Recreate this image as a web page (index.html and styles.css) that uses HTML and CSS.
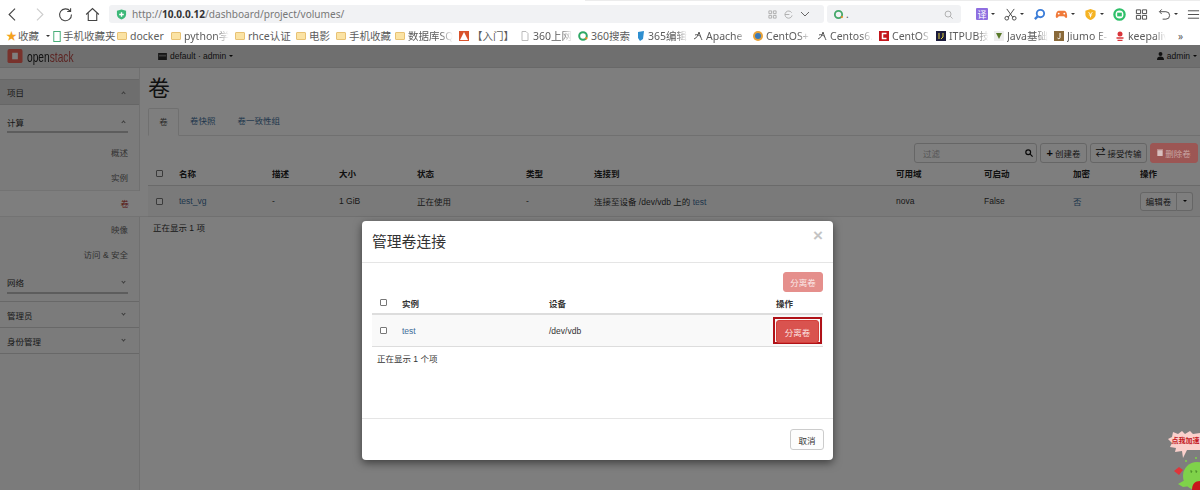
FILE: index.html
```html
<!DOCTYPE html>
<html lang="zh-CN">
<head>
<meta charset="utf-8">
<title>卷 - OpenStack Dashboard</title>
<link rel="stylesheet" href="styles.css">
</head>
<body>
<header class="browser">
  <div class="toolbar">
    <svg class="tb-nav" viewBox="0 0 20 20"><path d="M13 3 6 10l7 7" stroke="#444"/></svg>
    <svg class="tb-nav" viewBox="0 0 20 20"><path d="M7 3l7 7-7 7" stroke="#ccc"/></svg>
    <svg class="tb-nav" viewBox="0 0 20 20"><path d="M15.500 6A7 7 0 1 0 17 10M16 2.500V6.500H12" stroke="#444"/></svg>
    <svg class="tb-nav" viewBox="0 0 20 20"><path d="M2.500 10 10 3l7.500 7M5 8.500V17h10V8.500" stroke="#444"/></svg>
    <div class="address">
      <svg class="shield" viewBox="0 0 12 12"><path d="M6 .5 11 2v4c0 3-2.500 4.800-5 5.500C3.500 10.800 1 9 1 6V2z" fill="#3cb878"/><path d="M6 3.500v5M3.500 6h5" stroke="#fff" stroke-width="1.500"/></svg>
      <span class="url">http://<b>10.0.0.12</b>/dashboard/project/volumes/</span>
      <span class="addr-tools">
        <svg class="mini" viewBox="0 0 10 10"><path d="M1 1h3v3H1zM6 1h3v3H6zM1 6h3v3H1zM6 6h3v3H6z" stroke="#aaa" fill="none"/></svg>
        <svg class="mini" viewBox="0 0 10 10"><path d="M8.500 3A4 4 0 1 0 9 6M1 5h5" stroke="#aaa" fill="none"/></svg>
        <svg class="chev" viewBox="0 0 10 10"><path d="M1 3l4 4 4-4" stroke="#666" fill="none"/></svg>
      </span>
    </div>
    <div class="search">
      <svg class="q" viewBox="0 0 12 12"><circle cx="6" cy="6" r="4" stroke="#45a86a" stroke-width="2" fill="none"/><path d="M9 9.500 10.500 8" stroke="#f08a24" stroke-width="2"/></svg>
      <span class="dots">.</span>
      <svg class="mag" viewBox="0 0 10 10"><circle cx="4.500" cy="4.500" r="3.300" stroke="#aaa" fill="none"/><path d="m7 7 2.500 2.500" stroke="#aaa"/></svg>
    </div>
    <div class="tools">
      <span class="tool t1"><i class="yi">译</i></span><i class="drop"></i>
      <svg class="tool t2" viewBox="0 0 14 14"><path d="M3 1l6.500 9M11 1 4.500 10" stroke="#444" fill="none"/><circle cx="3" cy="11" r="2" stroke="#444" fill="none"/><circle cx="11" cy="11" r="2" stroke="#444" fill="none"/></svg><i class="drop"></i>
      <svg class="tool t3" viewBox="0 0 14 14"><circle cx="8" cy="6" r="4" stroke="#3b7dd8" stroke-width="2" fill="none"/><path d="M5 9 2 12" stroke="#3b7dd8" stroke-width="2.500"/></svg>
      <svg class="tool t4" viewBox="0 0 14 14"><path d="M4 3h6c2.500 0 3.500 5 3 7-.5 1.500-2 1-3-1H4c-1 2-2.500 2.500-3 1-.5-2 .5-7 3-7z" fill="#f07a3a"/><circle cx="10" cy="6" r="1" fill="#fff"/><circle cx="4" cy="6" r="1" fill="#fff"/></svg><i class="drop"></i>
      <svg class="tool t5" viewBox="0 0 14 14"><path d="M7 1l5.500 2v4c0 3-3 5-5.500 6C4.500 12 1.500 10 1.500 7V3z" fill="#f5b324"/><path d="M5 4.500 7 7l2-2.500M7 7v3M5.200 7.500h3.600" stroke="#fff" fill="none"/></svg><i class="drop"></i>
      <svg class="tool t6" viewBox="0 0 14 14"><circle cx="7" cy="7" r="5.500" stroke="#2fc06a" stroke-width="2.500" fill="none"/><path d="M4.500 5h5v4h-5z" fill="#2fc06a"/></svg>
      <svg class="tool t7" viewBox="0 0 14 14"><path d="M1.500 2h4.500v4H1.500zM8 2h4.500v4H8zM1.500 8H6v4H1.500zM8 8h4.500v4H8z" stroke="#444" fill="none"/></svg>
      <svg class="tool t8" viewBox="0 0 14 14"><path d="M2 4h6.500a4 4 0 0 1 0 8H5M4 1.500 1.500 4 4 6.500" stroke="#444" fill="none"/></svg><i class="drop"></i>
      <svg class="tool t9" viewBox="0 0 14 14"><path d="M1 3h12M1 7h12M1 11h12" stroke="#444"/></svg>
    </div>
  </div>
  <nav class="bookmarks">
    <span class="star">★</span><span class="bm w28">收藏</span><i class="drop d-bm"></i>
    <svg class="bi" viewBox="0 0 8 12"><rect x=".5" y=".5" width="7" height="11" fill="none" stroke="#3aa76d"/></svg><span class="bm w54">手机收藏夹</span>
    <i class="folder"></i><span class="bm w41">docker</span>
    <i class="folder"></i><span class="bm w51 fade">python学</span>
    <i class="folder"></i><span class="bm w48">rhce认证</span>
    <i class="folder"></i><span class="bm w27">电影</span>
    <i class="folder"></i><span class="bm w46">手机收藏</span>
    <i class="folder"></i><span class="bm w51 fade">数据库SQ</span>
    <svg class="fav" viewBox="0 0 10 10"><path d="M0 0h10v10H0z" fill="#d9532c"/><path d="M5 1 9 9H1z" fill="#fff"/></svg><span class="bm w48">【入门】</span>
    <svg class="fav" viewBox="0 0 10 10"><path d="M2 .5h4l2 2v7H2z" fill="#fff" stroke="#bbb"/></svg><span class="bm w45 fade">360上网</span>
    <svg class="fav" viewBox="0 0 10 10"><circle cx="5" cy="5" r="3.800" stroke="#2fa866" stroke-width="2" fill="none"/><path d="M7.500 8 9 6.500" stroke="#f08a24" stroke-width="2"/></svg><span class="bm w46">360搜索</span>
    <svg class="fav fav-n" viewBox="0 0 8 10"><path d="M1 1l6-1-1 8-3 2-2-3z" fill="#2f8fd0"/></svg><span class="bm w45 fade">365编辑</span>
    <svg class="fav" viewBox="0 0 10 10"><path d="M1 8c3-1 4-4 5-7 1 3 2 6 3 8M2 4c2-1 4 0 6 2" stroke="#555" fill="none"/></svg><span class="bm w47 fade">Apache</span>
    <svg class="fav" viewBox="0 0 10 10"><circle cx="5" cy="5" r="5" fill="#e8a23a"/><circle cx="5" cy="5" r="3" fill="#3a7ab8"/></svg><span class="bm w51 fade">CentOS+</span>
    <svg class="fav" viewBox="0 0 10 10"><path d="M1 8c3-1 4-4 5-7 1 3 2 6 3 8M2 4c2-1 4 0 6 2" stroke="#555" fill="none"/></svg><span class="bm w49 fade">Centos6.</span>
    <svg class="fav" viewBox="0 0 10 10"><path d="M0 0h10v10H0z" fill="#c3161c"/><path d="M7.500 2.500h-4v5h4" stroke="#fff" stroke-width="1.500" fill="none"/></svg><span class="bm w44 fade">CentOS</span>
    <svg class="fav" viewBox="0 0 10 10"><path d="M0 0h10v10H0z" fill="#1c1c3c"/><path d="M3 2v6M7 2v4L5 8" stroke="#e0d040" fill="none"/></svg><span class="bm w45 fade">ITPUB技</span>
    <svg class="fav" viewBox="0 0 10 10"><path d="M0 0h10v10H0z" fill="#eee"/><path d="M2 2l3 6 3-6z" fill="#5a7a2a"/></svg><span class="bm w47 fade">Java基础</span>
    <svg class="fav" viewBox="0 0 10 10"><path d="M0 0h10v10H0z" fill="#8a6a3a"/><path d="M6 2v4.500c0 1.500-2 1.500-2.500.5" stroke="#fff" fill="none"/></svg><span class="bm w48 fade">Jiumo E-</span>
    <svg class="fav" viewBox="0 0 10 10"><circle cx="5" cy="3" r="2.500" fill="#d8343a"/><path d="M1.500 7h7M2.500 9.500h5" stroke="#d8343a" stroke-width="1.500"/></svg><span class="bm w43 fade">keepaliv</span>
    <span class="more">»</span>
  </nav>
</header>

<div class="app">
  <div class="topbar">
    <div class="brand">
      <svg class="logo" viewBox="0 0 16 16"><rect x="0" y="0" width="16" height="15" rx="2" fill="#f06458"/><rect x="5" y="4" width="6" height="7" fill="#fff"/></svg>
      <span class="brand-name">open<span class="brand-red">stack</span></span>
    </div>
    <div class="ctx">
      <svg class="ctx-ico" viewBox="0 0 10 8"><path d="M0 0h10v8H0z" fill="#2a2a2a"/><path d="M1 2h8v2H1z" fill="#777"/></svg>
      <span>default · admin</span><i class="caret"></i>
    </div>
    <div class="user">
      <svg class="user-ico" viewBox="0 0 8 9"><circle cx="4" cy="2.200" r="2.200" fill="#222"/><path d="M0 9c0-3 1.500-4 4-4s4 1 4 4z" fill="#222"/></svg>
      <span>admin</span><i class="caret"></i>
    </div>
  </div>
  <div class="body">
    <aside class="sidebar">
      <div class="s-head s-open">项目<i class="chev-up"></i></div>
      <div class="s-group">计算<i class="chev-up"></i></div>
      <a class="s-link s-first">概述</a>
      <a class="s-link s-last">实例</a>
      <a class="s-link s-active">卷</a>
      <a class="s-link">映像</a>
      <a class="s-link">访问 &amp; 安全</a>
      <div class="s-group s-net">网络<i class="chev-down"></i></div>
      <div class="s-head">管理员<i class="chev-down"></i></div>
      <div class="s-head">身份管理<i class="chev-down"></i></div>
    </aside>
    <main class="content">
      <h1 class="title">卷</h1>
      <ul class="tabs">
        <li class="tab tab-on">卷</li>
        <li class="tab">卷快照</li>
        <li class="tab">卷一致性组</li>
      </ul>
      <div class="actions">
        <div class="filter"><span>过滤</span>
          <svg class="f-ico" viewBox="0 0 10 10"><circle cx="4" cy="4" r="3" stroke="#111" stroke-width="1.500" fill="none"/><path d="m6.500 6.500 3 3" stroke="#111" stroke-width="1.500"/></svg>
        </div>
        <button class="btn b-create"><b class="plus">+</b><span>创建卷</span></button>
        <button class="btn b-accept"><b class="swap">⇄</b><span>接受传输</span></button>
        <button class="btn b-del"><svg class="trash" viewBox="0 0 8 9"><path d="M1 2h6v7H1zM0 1h8" fill="#d8c0c0" stroke="#d8c0c0"/></svg><span>删除卷</span></button>
      </div>
      <div class="vol-table">
        <div class="vrow vhead">
          <span class="cb-cell"><i class="cb"></i></span><span>名称</span><span>描述</span><span>大小</span><span>状态</span><span>类型</span><span>连接到</span><span>可用域</span><span>可启动</span><span>加密</span><span>操作</span>
        </div>
        <div class="vrow vbody">
          <span class="cb-cell"><i class="cb"></i></span><a class="lnk">test_vg</a><span>-</span><span>1 GiB</span><span>正在使用</span><span>-</span><span>连接至设备 /dev/vdb 上的 <a class="lnk">test</a></span><span>nova</span><span>False</span><a class="lnk">否</a>
          <span class="split"><button class="btn b-edit">编辑卷</button><button class="btn b-car"><i class="caret"></i></button></span>
        </div>
      </div>
      <p class="count">正在显示 1 项</p>
    </main>
  </div>

  <div class="backdrop"></div>

  <section class="modal">
    <div class="m-head"><h2>管理卷连接</h2><span class="close">×</span></div>
    <div class="m-body">
      <div class="m-actions"><button class="btn b-detach-off">分离卷</button></div>
      <div class="mrow mhead"><span class="cb-cell"><i class="cb"></i></span><span>实例</span><span>设备</span><span>操作</span></div>
      <div class="mrow mbody"><span class="cb-cell"><i class="cb"></i></span><a class="lnk">test</a><span>/dev/vdb</span><span class="hl"><button class="btn b-detach">分离卷</button></span></div>
      <p class="m-count">正在显示 1 个项</p>
    </div>
    <div class="m-foot"><button class="btn b-cancel">取消</button></div>
  </section>

  <div class="mascot">
    <svg viewBox="0 0 34 60" width="34" height="60">
      <path d="M2 9 6 7 7 2l5 2 4-3 3 3 5-3 3 3 7-1v17H21l-4 8-1-7-7 1 1-4-6-1 2-4z" fill="#fbd0cc"/>
      <text x="5.500" y="13" class="m-text">点我加速</text>
      <path d="M8 41l5-4 4 3-4 5z" fill="#e0343a"/>
      <circle cx="31" cy="46" r="14" fill="#7fd24a"/>
      <path d="M19 50 12 54l5 3 7-1z" fill="#7fd24a"/>
      <path d="M26 60c0-6 3-9 8-9v9z" fill="#c8161c"/>
      <path d="M24 41h2l-1 2M29 41h2l-1 2" stroke="#3c7a20" fill="none" stroke-width=".7"/>
      <circle cx="20" cy="31" r="1" fill="#7fd24a"/><circle cx="30" cy="28" r="1" fill="#7fd24a"/>
    </svg>
  </div>
</div>
</body>
</html>
```
FILE: styles.css
```css
* { box-sizing: border-box; }
html, body { margin: 0; padding: 0; height: 490px; overflow: hidden; }
body { width: 1200px; font-family: "Liberation Sans", "Noto Sans CJK SC", sans-serif; font-size: 8.5px; color: #333; background: #fff; }
i { font-style: normal; display: inline-block; }

/* browser chrome */
.browser { height: 45px; background: #fff; font-family: "Noto Sans", "Noto Sans CJK SC", sans-serif; }
.toolbar { height: 27px; display: flex; align-items: center; padding: 1px 0 0 4px; background: linear-gradient(#ececec, #ececec) 585px 0 / 615px 1px no-repeat; }
.tb-nav { width: 17px; height: 17px; margin-right: 9.500px; fill: none; stroke-width: 1.300; flex: none; }
.address { width: 715px; height: 18px; margin-left: -1px; background: #f1f2f4; border-radius: 3px; display: flex; align-items: center; padding: 0 0 0 7px; flex: none; }
.shield { width: 11px; height: 11px; margin-right: 5px; }
.url { font-size: 10.100px; color: #777; white-space: nowrap; flex: 1; }
.url b { color: #333; font-weight: 700; }
.addr-tools { display: flex; gap: 7px; align-items: center; padding-right: 14px; }
.mini { width: 9px; height: 9px; }
.chev { width: 10px; height: 10px; }
.search { width: 134px; height: 18px; margin-left: 3px; background: #f1f2f4; border-radius: 3px; display: flex; align-items: center; padding: 0 8px 0 6px; flex: none; }
.q { width: 11px; height: 11px; }
.dots { flex: 1; font-size: 10px; line-height: 10px; color: #555; padding-left: 2px; }
.mag { width: 9px; height: 9px; }
.tools { display: flex; align-items: center; margin-left: 15px; flex: none; }
.tool { width: 13px; height: 13px; flex: none; }
.t1 { background: #8f6ee0; display: flex; align-items: center; justify-content: center; border-radius: 1px; width: 12px; height: 12px; }
.yi { color: #fff; font-size: 9px; line-height: 9px; }
.drop { width: 0; height: 0; border: 2px solid transparent; border-top: 2.500px solid #333; border-bottom: 0; margin: 0 9px 0 3px; flex: none; }
.t3, .t6 { margin-right: 9px; }
.t7 { margin-right: 10px; }
.bookmarks { height: 18px; display: flex; align-items: center; padding-left: 6px; font-size: 10.500px; color: #5c5c5c; white-space: nowrap; overflow: hidden; }
.star { color: #f4a21e; font-size: 11px; width: 12px; line-height: 12px; flex: none; }
.bm { display: block; overflow: hidden; flex: none; line-height: 18px; }
.fade { mask-image: linear-gradient(to right, #000 62%, transparent 88%); -webkit-mask-image: linear-gradient(to right, #000 62%, transparent 88%); }
.w27 { width: 27px; } .w28 { width: 28px; } .w41 { width: 41px; } .w43 { width: 43px; } .w44 { width: 44px; } .w45 { width: 45px; }
.w46 { width: 46px; } .w47 { width: 47px; } .w48 { width: 48px; } .w49 { width: 49px; } .w51 { width: 51px; } .w54 { width: 54px; }
.d-bm { margin: 0 3px 0 0; }
.bi { width: 8px; height: 11px; margin-right: 2px; flex: none; }
.folder { width: 10px; height: 8px; background: #fbe3a4; border: 1px solid #e8c274; border-radius: 1px; margin-right: 3px; flex: none; }
.fav { width: 10px; height: 10px; margin-right: 3px; flex: none; }
.fav-n { width: 8px; }
.more { margin-left: 7px; font-size: 10px; }

/* app */
.app { position: relative; height: 445px; background: #fdfdfd; overflow: hidden; }
.topbar { height: 23px; background: #dedede; display: flex; align-items: center; border-bottom: 1px solid #d0d0d0; }
.brand { width: 158px; display: flex; align-items: center; padding-left: 7px; }
.logo { width: 16px; height: 15px; margin-right: 4px; }
.brand-name { font-size: 15px; font-family: "Liberation Sans Narrow", "Liberation Sans", sans-serif; color: #222; transform: scaleX(.68); transform-origin: left; }
.brand-red { color: #b84a46; }
.ctx { display: flex; align-items: center; gap: 3px; color: #222; font-size: 8.500px; }
.ctx-ico { width: 9px; height: 7px; }
.user { margin-left: auto; display: flex; align-items: center; gap: 3px; padding-right: 3px; color: #222; }
.user-ico { width: 7px; height: 8px; }
.caret { width: 0; height: 0; border: 2.500px solid transparent; border-top: 2.500px solid #111; border-bottom: 0; }

.body { display: flex; height: 422px; }
.sidebar { width: 140px; flex: none; background: #f6f6f6; border-right: 1px solid #e0e0e0; padding-top: 11px; color: #333; position: relative; z-index: 1; }
.s-head { height: 26px; padding: 0 14px 0 7px; display: flex; align-items: center; justify-content: space-between; border-top: 1px solid #d0d0d0; font-size: 8.500px; }
.s-open { background: #dcdcdc; border-bottom: 1px solid #ccc; }
.s-head:last-child { border-bottom: 1px solid #d0d0d0; height: 27px; }
.s-group { height: 28px; margin: 0 11px 0 7px; padding: 7px 3px 0 0; display: flex; align-items: center; justify-content: space-between; border-bottom: 2px solid #bbb; font-size: 8.500px; }
.s-net { height: 26px; padding-top: 4px; margin-bottom: 7px; }
.s-link { display: block; height: 25px; line-height: 25px; text-align: right; padding-right: 11px; color: #666; font-size: 8.500px; }
.s-first { margin-top: 8px; }
.s-last { border-bottom: 1px solid #e6e6e6; }
.s-active { background: #fdfdfd; color: #b3322c; height: 26px; line-height: 26px; margin-bottom: 1px; width: 148px; border-bottom: 1px solid #e6e6e6; padding-right: 19px; }
.chev-up, .chev-down { width: 3px; height: 3px; border-left: 1px solid #777; border-top: 1px solid #777; flex: none; }
.chev-up { transform: rotate(45deg); margin-top: 2px; }
.chev-down { transform: rotate(225deg); margin-top: -2px; }

.content { flex: 1; min-width: 0; padding: 6px 0 0 8px; }
.title { margin: 0; font-size: 22px; font-weight: 400; line-height: 29px; color: #222; height: 34px; }
.tabs { margin: 0; padding: 0; list-style: none; display: flex; height: 28px; border-bottom: 1px solid #e0e0e0; }
.tab { height: 28px; padding: 0 11px; line-height: 27px; color: #3f6e99; font-size: 8.500px; }
.tab-on { width: 31px; padding: 0; text-align: center; color: #555; background: #fdfdfd; border: 1px solid #e0e0e0; border-bottom-color: #fdfdfd; border-radius: 2px 2px 0 0; }
.actions { display: flex; justify-content: flex-end; gap: 3px; margin-top: 6px; padding-right: 2px; height: 21px; align-items: center; }
.filter { width: 123px; height: 20px; border: 1px solid #ccc; border-radius: 3px; display: flex; align-items: center; justify-content: space-between; padding: 0 3px 0 8px; color: #aaa; background: #fdfdfd; }
.f-ico { width: 8px; height: 8px; }
.btn { font: inherit; font-size: 8.500px; border: 1px solid #ccc; border-radius: 3px; background: #fdfdfd; color: #333; padding: 0; margin: 0; height: 20px; display: inline-flex; align-items: center; justify-content: center; gap: 2px; }
.b-create { width: 47px; }
.b-accept { width: 57px; }
.b-del { width: 48px; background: #9c5654; border-color: #9c5654; color: #c8a4a2; position: relative; z-index: 6; }
.plus { font-size: 11px; line-height: 10px; color: #111; }
.swap { font-size: 10px; line-height: 10px; color: #111; font-weight: 400; }
.trash { width: 6px; height: 7px; }
.vol-table { margin-top: -2px; }
.vrow { display: grid; grid-template-columns: 31px 93px 67px 78px 109px 68px 302px 88px 89px 67px 60px; align-items: center; width: 1052px; }
.vhead { height: 25px; font-weight: 700; color: #222; border-bottom: 1px solid #d4d4d4; }
.vbody { height: 31px; background: #f5f5f5; border-bottom: 1px solid #e0e0e0; }
.cb-cell { display: flex; padding-left: 8px; }
.cb { width: 7px; height: 7px; border: 1px solid #777; border-radius: 1px; background: #fff; }
.lnk { color: #3f6e99; }
.split { display: flex; }
.b-edit { width: 37px; height: 19px; border-radius: 3px 0 0 3px; }
.b-car { width: 16px; height: 19px; border-left: 0; border-radius: 0 3px 3px 0; }
.count { margin: 5px 0 0 5px; line-height: 12px; color: #333; }

.backdrop { position: absolute; inset: 0; background: rgba(0, 0, 0, .5); z-index: 5; }
.modal { position: absolute; left: 362px; top: 176px; width: 471px; height: 239px; background: #fff; border-radius: 4px; box-shadow: 0 3px 9px rgba(0, 0, 0, .5); z-index: 6; display: flex; flex-direction: column; }
.m-head { height: 42px; border-bottom: 1px solid #e5e5e5; display: flex; align-items: center; justify-content: space-between; padding: 0 10px; flex: none; }
.m-head h2 { margin: 0; font-size: 14.800px; font-weight: 400; color: #333; line-height: 20px; }
.close { font-size: 17px; line-height: 17px; font-weight: 700; color: #c4c4c4; margin: -12px 0 0; }
.m-body { flex: 1; padding: 9px 10px 0; }
.m-actions { display: flex; justify-content: flex-end; height: 20px; }
.b-detach-off { width: 40px; height: 20px; background: #e58f8c; border-color: #e58f8c; color: #fbe9e8; }
.mrow { display: grid; grid-template-columns: 30px 147px 227px 47px; align-items: center; width: 451px; }
.mhead { height: 23px; font-weight: 700; color: #333; border-bottom: 2px solid #ddd; }
.mbody { height: 32px; background: #f9f9f9; border-bottom: 1px solid #ddd; color: #333; }
.hl { justify-self: start; margin-left: -3px; width: 49px; height: 27px; border: 2px solid #b01218; padding: 1px; display: flex; }
.b-detach { width: 43px; height: 23px; background: #d9534f; border: 1px solid #d43f3a; color: #fbe4e3; }
.m-count { margin: 6px 0 0 5px; line-height: 12px; color: #333; }
.m-foot { height: 42px; border-top: 1px solid #e5e5e5; display: flex; align-items: center; justify-content: flex-end; padding: 0 9px; flex: none; }
.b-cancel { width: 34px; height: 21px; }

.mascot { position: absolute; right: 0; bottom: 0; width: 34px; height: 60px; z-index: 7; line-height: 0; }
.m-text { font-size: 7px; font-weight: 700; fill: #c3161c; font-family: "Noto Sans CJK SC", sans-serif; }
```
